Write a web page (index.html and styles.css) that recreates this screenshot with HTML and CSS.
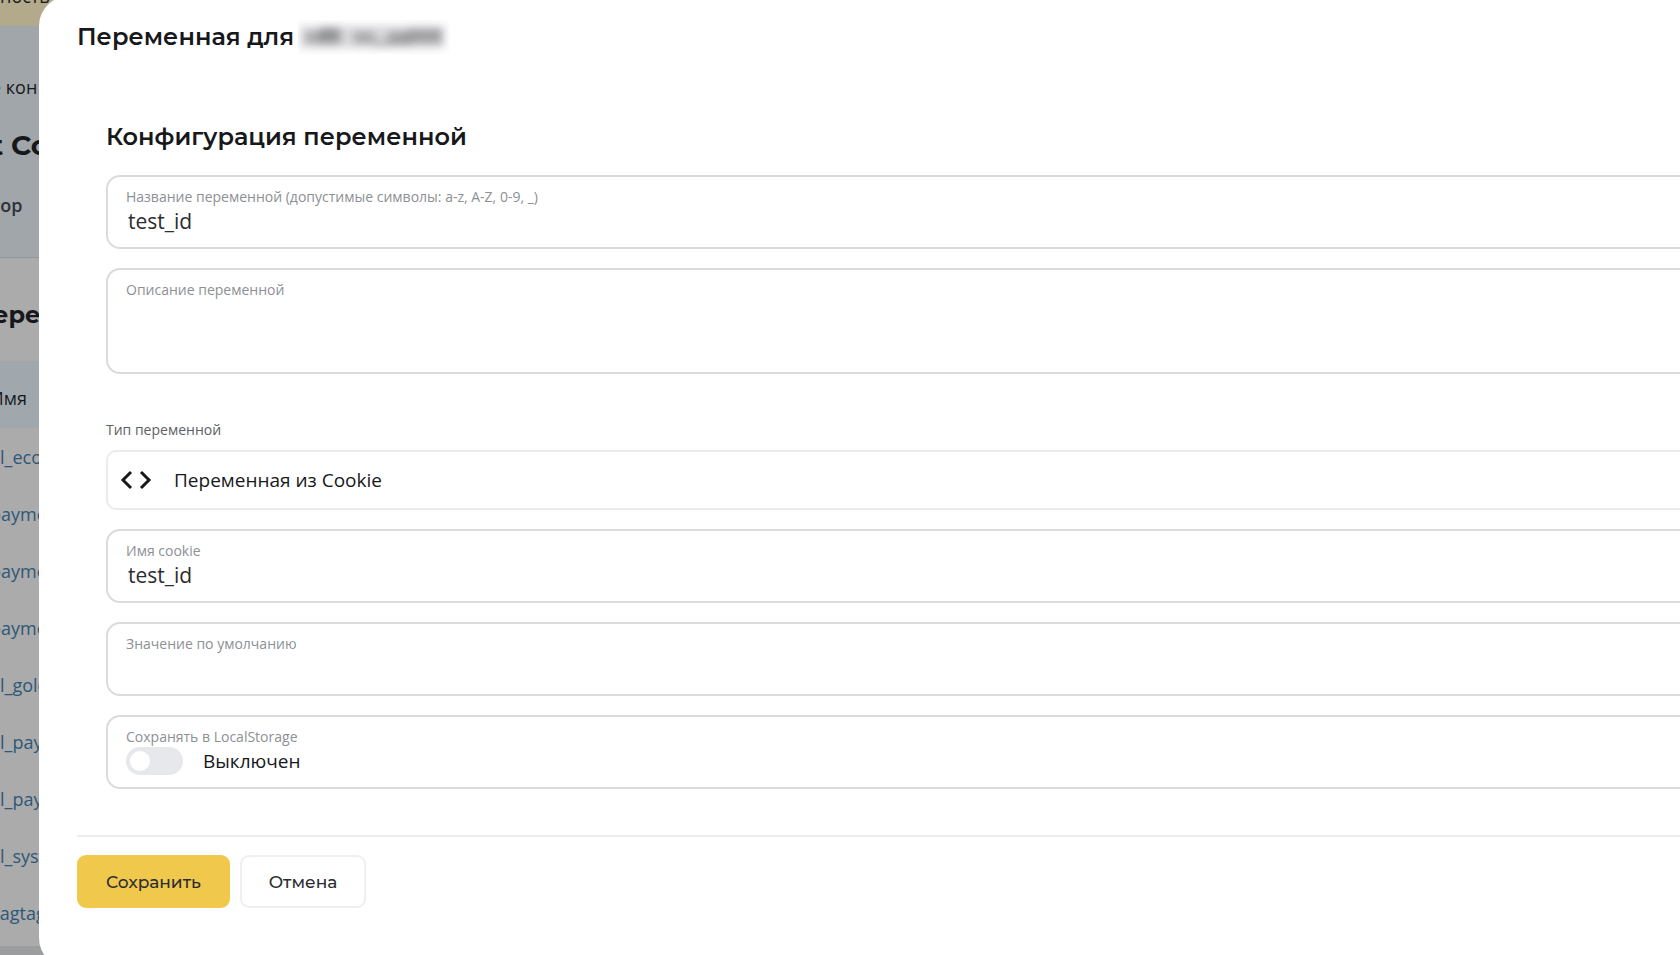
FILE: index.html
```html
<!DOCTYPE html>
<html lang="ru">
<head>
    <meta charset="UTF-8">
    <title>Конфигурация переменной</title>
    <link rel="stylesheet" href="styles.css">
</head>
<body>
    <div class="page">
        <div class="page-topbar">ность</div>
        <div class="page-head">
            <p class="page-crumbs"><a href="#">е</a> кон</p>
            <p class="page-title">t Co</p>
            <p class="page-tab">тор</p>
        </div>
        <div class="page-content">
            <h3>ерем</h3>
            <table class="page-table">
                <thead>
                    <tr><th>Имя</th></tr>
                </thead>
                <tbody>
                    <tr><td><a href="#">al_eco</a></td></tr>
                    <tr><td><a href="#">payme</a></td></tr>
                    <tr><td><a href="#">payme</a></td></tr>
                    <tr><td><a href="#">payme</a></td></tr>
                    <tr><td><a href="#">al_gold</a></td></tr>
                    <tr><td><a href="#">al_pay</a></td></tr>
                    <tr><td><a href="#">al_pay</a></td></tr>
                    <tr><td><a href="#">al_syst</a></td></tr>
                    <tr><td><a href="#">gagtag</a></td></tr>
                </tbody>
            </table>
        </div>
    </div>

    <div class="modal" role="dialog" aria-labelledby="modal-title">
        <h1 class="modal-title" id="modal-title">
            Переменная для
            <svg class="masked-name" width="152" height="34" viewBox="0 0 152 34" aria-hidden="true">
                <defs>
                    <filter id="soft" x="-20%" y="-50%" width="140%" height="200%">
                        <feGaussianBlur stdDeviation="4"/>
                    </filter>
                </defs>
                <g filter="url(#soft)" fill="#4c4e52">
                    <rect x="2" y="6" width="144" height="22" opacity=".22"/>
                    <rect x="8" y="12" width="16" height="11" opacity=".35"/>
                    <rect x="22" y="8" width="20" height="15" opacity=".5"/>
                    <rect x="56" y="12" width="20" height="11" opacity=".35"/>
                    <rect x="76" y="21" width="14" height="5" opacity=".3"/>
                    <rect x="90" y="12" width="22" height="13" opacity=".4"/>
                    <rect x="110" y="9" width="34" height="14" opacity=".4"/>
                </g>
            </svg>
        </h1>

        <form class="variable-form">
            <div class="form-body">
                <h2>Конфигурация переменной</h2>

                <div class="field">
                    <label for="var-name">Название переменной (допустимые символы: a-z, A-Z, 0-9, _)</label>
                    <input type="text" id="var-name" value="test_id">
                </div>
                <div class="field">
                    <label for="var-desc">Описание переменной</label>
                    <textarea id="var-desc"></textarea>
                </div>

                <label class="type-label" for="var-type">Тип переменной</label>
                <div class="type-select">
                    <svg width="32" height="20" viewBox="0 0 32 20" fill="none" stroke="#16181c" stroke-width="3" aria-hidden="true">
                        <path d="M11 2 3 10l8 8M21 2l8 8-8 8"/>
                    </svg>
                    <select id="var-type">
                        <option>Переменная из Cookie</option>
                    </select>
                </div>

                <div class="field">
                    <label for="cookie-name">Имя cookie</label>
                    <input type="text" id="cookie-name" value="test_id">
                </div>
                <div class="field">
                    <label for="default-value">Значение по умолчанию</label>
                    <input type="text" id="default-value">
                </div>
                <div class="field">
                    <label for="local-storage">Сохранять в LocalStorage</label>
                    <div class="switch-row">
                        <input type="checkbox" class="switch" id="local-storage">
                        <span>Выключен</span>
                    </div>
                </div>
            </div>

            <div class="form-actions">
                <button type="submit" class="btn btn-primary">Сохранить</button>
                <button type="button" class="btn">Отмена</button>
            </div>
        </form>
    </div>
</body>
</html>
```
FILE: styles.css
```css
* {
    box-sizing: border-box;
}
body {
    margin: 0;
    height: 100vh;
    overflow: hidden;
    background: #9b9d9f;
    color: #16181c;
    font-family: "Open Sans", sans-serif;
    font-size: 19px;
}

/* page under the dialog */
.page {
    margin-top: -14px;
    white-space: nowrap;
    font-size: 18px;
    line-height: 24px;
}
.page p,
.page h3 {
    margin: 0;
}
.page a {
    color: #2d5877;
    text-decoration: none;
}
.page-topbar {
    height: 40px;
    line-height: 20px;
    background: #b3a98b;
}
.page-head {
    height: 232px;
    padding-top: 49px;
    margin-left: -9px;
    background: #a1a6aa;
    border-bottom: 1px solid #92979c;
}
.page .page-crumbs a {
    color: #1f6d98;
}
.page .page-title {
    margin-top: 28px;
    font: 700 28px/36px "Montserrat", "Inter", sans-serif;
}
.page .page-tab {
    margin-top: 30px;
    font-weight: 600;
    color: #2e3135;
}
.page-content {
    height: 688px;
    background: #ababab;
}
.page-content h3 {
    padding-top: 41px;
    margin-left: -7px;
    font: 700 24px/32px "Montserrat", "Inter", sans-serif;
}
.page-table {
    width: 100%;
    margin: 30px 0 0 -10px;
    border-collapse: collapse;
}
.page-table th {
    height: 67px;
    padding: 6px 0 0;
    text-align: left;
    font-weight: 400;
    background: #a1a8ad;
}
.page-table td {
    height: 57px;
    padding: 0;
}

/* dialog */
.modal {
    position: fixed;
    inset: -4px -40px -13px 39px;
    padding: 24px 0 0 38px;
    background: #fff;
    border-radius: 30px 0 0 30px;
}
.modal-title {
    display: flex;
    align-items: center;
    gap: 4px;
    margin: 0;
    font: 600 24px/34px "Montserrat", "Inter", sans-serif;
}
.form-body {
    padding: 67px 0 46px 29px;
}
.form-body h2 {
    margin: 0 0 22px;
    font: 600 24px/32px "Montserrat", "Inter", sans-serif;
}
.field {
    min-height: 74px;
    margin-bottom: 19px;
    padding: 10px 18px;
    border: 2px solid #d9dbdd;
    border-radius: 14px;
}
.field:last-child {
    margin-bottom: 0;
}
.field label,
.type-label {
    display: block;
    font-size: 14px;
    line-height: 20px;
    color: #8d9094;
}
.field input[type="text"],
.field textarea {
    display: block;
    width: 100%;
    height: 28px;
    padding: 0 2px;
    border: 0;
    outline: 0;
    background: none;
    color: #2b2d31;
    font: inherit;
    font-size: 21px;
    resize: none;
}
.field textarea {
    height: 62px;
}
.type-label {
    margin: 46px 0 10px;
    color: #5d6065;
}
.type-select {
    display: flex;
    align-items: center;
    gap: 22px;
    height: 60px;
    margin-bottom: 19px;
    padding-left: 12px;
    border: 2px solid #ebebed;
    border-radius: 10px;
}
.type-select select {
    flex: 1;
    height: 100%;
    padding: 0;
    border: 0;
    appearance: none;
    background: none;
    color: inherit;
    font: inherit;
}
.switch-row {
    display: flex;
    align-items: center;
    gap: 20px;
    height: 28px;
}
.switch {
    appearance: none;
    width: 57px;
    height: 28px;
    margin: 0;
    padding: 4px;
    border-radius: 14px;
    background: #e7e8ec;
}
.switch::before {
    content: "";
    display: block;
    width: 20px;
    height: 20px;
    border-radius: 50%;
    background: #fff;
}
.switch:checked::before {
    margin-left: auto;
}
.form-actions {
    display: flex;
    gap: 10px;
    padding-top: 18px;
    border-top: 2px solid #ececee;
}
.btn {
    height: 53px;
    padding: 0 27px;
    border: 2px solid #efeff1;
    border-radius: 9px;
    background: #fff;
    color: #2b2d31;
    font: 500 17px/24px "Montserrat", "Inter", sans-serif;
}
.btn-primary {
    border-color: #f0c84c;
    background: #f0c84c;
}
```
